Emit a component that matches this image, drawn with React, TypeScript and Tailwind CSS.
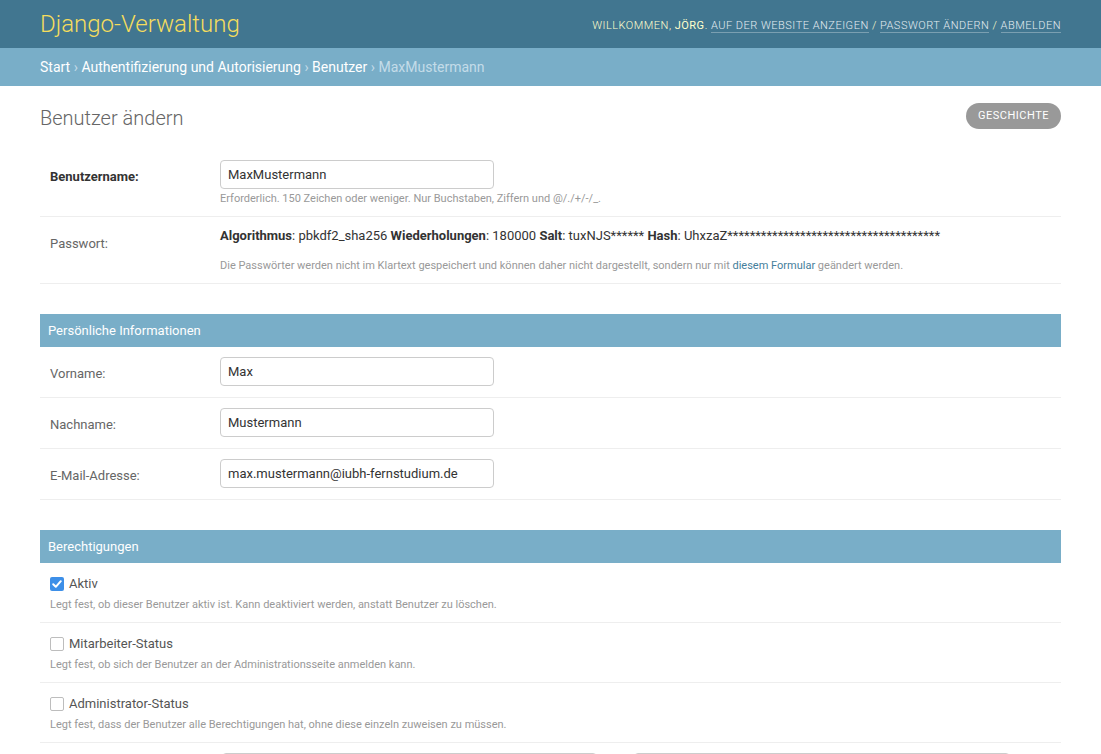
import React from "react";

function Label({ children, bold = false }: { children?: React.ReactNode; bold?: boolean }) {
  return (
    <label
      className={
        "block w-[170px] shrink-0 pr-[10px] pt-[8px] text-[13px] leading-[18px] " +
        (bold ? "font-bold text-[#333]" : "text-[#666]")
      }
    >
      {children}
    </label>
  );
}

function TextInput({ value }: { value: string }) {
  return (
    <input
      readOnly
      defaultValue={value}
      className="block h-[29px] w-[274px] rounded-[4px] border border-[#ccc] bg-white px-[7px] text-[13px] text-[#333] outline-none"
    />
  );
}

function Help({ children, className = "" }: { children: React.ReactNode; className?: string }) {
  return <div className={"text-[11px] leading-[14px] text-[#999] " + className}>{children}</div>;
}

function Checkbox({ checked }: { checked: boolean }) {
  if (checked) {
    return (
      <span className="flex h-[14px] w-[14px] items-center justify-center rounded-[2px] bg-[#3d8fe8]">
        <svg viewBox="0 0 12 12" className="h-[12px] w-[12px]" fill="none">
          <path d="M2.2 6.2 L4.8 8.8 L9.8 3.2" stroke="white" strokeWidth="2" strokeLinecap="round" strokeLinejoin="round" />
        </svg>
      </span>
    );
  }
  return <span className="block h-[14px] w-[14px] rounded-[2px] border border-[#bdbdbd] bg-white" />;
}

function CheckRow({ label, help, checked }: { label: string; help: string; checked: boolean }) {
  return (
    <div className="border-b border-[#eee] p-[10px]">
      <div className="flex h-[22px] items-center">
        <Checkbox checked={checked} />
        <span className="ml-[5px] text-[13px] text-[#555]">{label}</span>
      </div>
      <Help className="pt-[3px]">{help}</Help>
    </div>
  );
}

function TextRow({ label, value }: { label: string; value: string }) {
  return (
    <div className="flex border-b border-[#eee] px-[10px] pb-[11px] pt-[10px]">
      <Label>{label}</Label>
      <TextInput value={value} />
    </div>
  );
}

function ModuleHeader({ children }: { children: React.ReactNode }) {
  return (
    <h2 className="bg-[#79aec8] px-[8px] py-[8px] text-[13px] font-normal leading-[17px] text-white">{children}</h2>
  );
}

export default function App() {
  return (
    <div className="h-screen overflow-hidden bg-white font-[Roboto,sans-serif] text-[14px] text-[#333]">
      <header className="flex h-[48px] items-center justify-between bg-[#417690] px-[40px] text-[#ffc]">
        <h1 className="text-[24px] font-light leading-[28px] text-[#f5dd5d]">Django-Verwaltung</h1>
        <div className="pt-[4px] text-[11px] font-light uppercase leading-[14px] tracking-[0.5px]">
          Willkommen, <strong className="font-normal">Jörg</strong>.{" "}
          <a className="border-b border-white/30 text-[#e4ecf0]">Auf der Website anzeigen</a> /{" "}
          <a className="border-b border-white/30 text-[#e4ecf0]">Passwort ändern</a> /{" "}
          <a className="border-b border-white/30 text-[#e4ecf0]">Abmelden</a>
        </div>
      </header>

      <div className="bg-[#79aec8] px-[40px] py-[10px] text-[14px] leading-[18px] text-white">
        <a>Start</a> <span className="text-[#c4dce8]">›</span> <a>Authentifizierung und Autorisierung</a>{" "}
        <span className="text-[#c4dce8]">›</span> <a>Benutzer</a>{" "}
        <span className="text-[#c4dce8]">› MaxMustermann</span>
      </div>

      <main className="px-[40px] pt-[20px]">
        <div className="mb-[20px] flex items-start justify-between">
          <h1 className="text-[20px] font-light leading-[24px] text-[#666]">Benutzer ändern</h1>
          <a className="-mt-[3px] rounded-[15px] bg-[#999] px-[12px] py-[3px] text-[11px] uppercase leading-[20px] tracking-[0.5px] text-white">
            Geschichte
          </a>
        </div>

        <fieldset className="mb-[30px]">
          <div className="flex border-b border-[#eee] p-[10px]">
            <Label bold>Benutzername:</Label>
            <div>
              <TextInput value="MaxMustermann" />
              <Help className="pt-[3px]">
                Erforderlich. 150 Zeichen oder weniger. Nur Buchstaben, Ziffern und @/./+/-/_.
              </Help>
            </div>
          </div>
          <div className="flex border-b border-[#eee] p-[10px]">
            <Label>Passwort:</Label>
            <div>
              <div className="text-[13px] leading-[18px] text-[#333]">
                <strong className="font-bold">Algorithmus</strong>: pbkdf2_sha256{" "}
                <strong className="font-bold">Wiederholungen</strong>: 180000{" "}
                <strong className="font-bold">Salt</strong>: tuxNJS******{" "}
                <strong className="font-bold">Hash</strong>: UhxzaZ**************************************
              </div>
              <Help className="pt-[14px]">
                Die Passwörter werden nicht im Klartext gespeichert und können daher nicht dargestellt, sondern nur
                mit <a className="text-[#447e9b]">diesem Formular</a> geändert werden.
              </Help>
            </div>
          </div>
        </fieldset>

        <fieldset className="mb-[30px]">
          <ModuleHeader>Persönliche Informationen</ModuleHeader>
          <TextRow label="Vorname:" value="Max" />
          <TextRow label="Nachname:" value="Mustermann" />
          <TextRow label="E-Mail-Adresse:" value="max.mustermann@iubh-fernstudium.de" />
        </fieldset>

        <fieldset className="mb-[30px]">
          <ModuleHeader>Berechtigungen</ModuleHeader>
          <CheckRow
            checked
            label="Aktiv"
            help="Legt fest, ob dieser Benutzer aktiv ist. Kann deaktiviert werden, anstatt Benutzer zu löschen."
          />
          <CheckRow
            checked={false}
            label="Mitarbeiter-Status"
            help="Legt fest, ob sich der Benutzer an der Administrationsseite anmelden kann."
          />
          <CheckRow
            checked={false}
            label="Administrator-Status"
            help="Legt fest, dass der Benutzer alle Berechtigungen hat, ohne diese einzeln zuweisen zu müssen."
          />
          <div className="flex border-b border-[#eee] p-[10px]">
            <Label />
            <div className="ml-[2px] flex">
              <div className="h-[200px] w-[375px] rounded-[4px] border border-[#ccc] bg-white" />
              <div className="w-[37px]" />
              <div className="h-[200px] w-[376px] rounded-[4px] border border-[#ccc] bg-white" />
            </div>
          </div>
        </fieldset>
      </main>
    </div>
  );
}
